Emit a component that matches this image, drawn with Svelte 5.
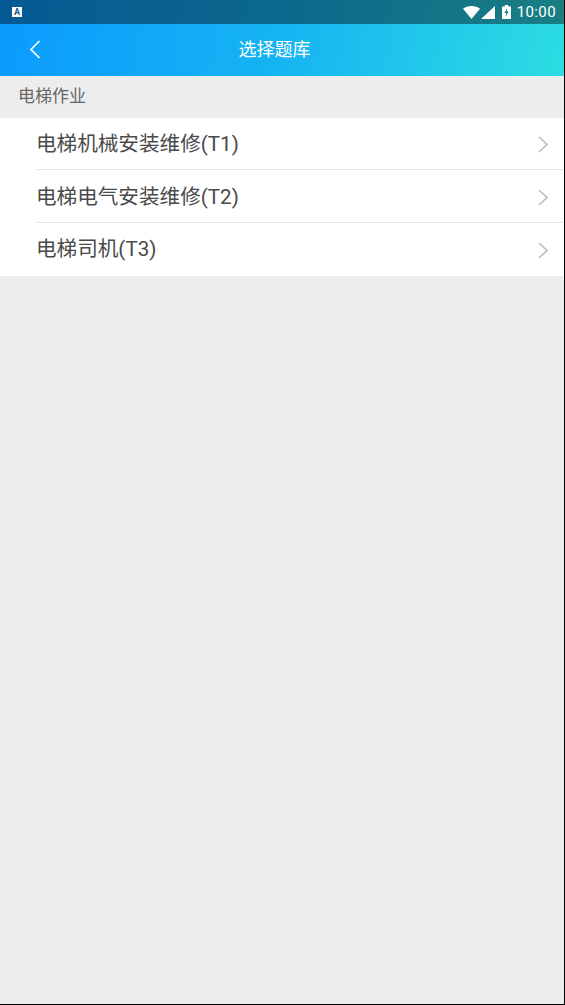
<script>
  const items = ["电梯机械安装维修(T1)", "电梯电气安装维修(T2)", "电梯司机(T3)"];
</script>

<div class="page">
  <div class="top">
    <div class="status">
      <div class="notice"><span>A</span></div>
      <div class="status-right">
        <svg class="wifi" width="17" height="13" viewBox="0 0 17 13">
          <path d="M0 2.800C2.300 1 5.200 0 8.500 0s6.200 1 8.500 2.800L8.500 13z" fill="#fff" />
        </svg>
        <svg class="signal" width="14" height="13" viewBox="0 0 14 13">
          <path d="M14 0v13H0z" fill="#fff" />
        </svg>
        <svg class="battery" width="9" height="14" viewBox="0 0 9 14">
          <path d="M2.800 0h3.400v1.500H9V14H0V1.500h2.800z" fill="#fff" />
          <path d="M5.200 3 2.300 8h1.900l-.4 3.500L6.700 6.500H4.700z" fill="#137a8f" />
        </svg>
        <span class="time">10:00</span>
      </div>
    </div>
    <div class="header">
      <svg class="back" width="12" height="19" viewBox="0 0 12 19">
        <path d="M10.500 1 2 9.500l8.500 8.500" fill="none" stroke="#fff" stroke-width="1.700" />
      </svg>
      <h1>选择题库</h1>
    </div>
  </div>

  <div class="section">电梯作业</div>

  <ul class="list">
    {#each items as item}
      <li>
        <div class="row">
          <span class="label">{item}</span>
          <svg class="chevron" width="11" height="17" viewBox="0 0 11 17">
            <path d="M1 1l8 7.500L1 16" fill="none" stroke="#bdbdbd" stroke-width="1.700" />
          </svg>
        </div>
      </li>
    {/each}
  </ul>
</div>

<style>
  :global(body) {
    margin: 0;
    background: #000;
  }
  .page {
    box-sizing: border-box;
    width: 564px;
    height: 1004px;
    background: #ededed;
    overflow: hidden;
    font-family: Roboto, "Noto Sans CJK SC", sans-serif;
  }
  .top {
    background: linear-gradient(100deg, #0a9bfe 0%, #16b4f2 50%, #2cdde2 100%);
  }
  .status {
    height: 24px;
    box-sizing: border-box;
    background: rgba(0, 0, 0, 0.42);
    display: flex;
    justify-content: space-between;
    align-items: center;
    padding: 0 8px 0 12px;
  }
  .notice {
    width: 10px;
    height: 10px;
    background: #fff;
    display: flex;
    align-items: center;
    justify-content: center;
  }
  .notice span {
    font-size: 9px;
    font-weight: 700;
    line-height: 10px;
    color: #0a5c92;
  }
  .status-right {
    display: flex;
    align-items: center;
    color: #fff;
  }
  .signal {
    margin-left: 1px;
  }
  .battery {
    margin-left: 7px;
  }
  .time {
    margin-left: 6px;
    font-size: 15px;
    letter-spacing: 0.4px;
  }
  .header {
    height: 52px;
    box-sizing: border-box;
    padding: 0 15px 4px 0;
    display: flex;
    align-items: center;
    justify-content: center;
    position: relative;
  }
  .back {
    position: absolute;
    left: 29px;
    top: 16px;
  }
  h1 {
    margin: 0;
    font-size: 18px;
    font-weight: 400;
    color: #fff;
  }
  .section {
    height: 42px;
    box-sizing: border-box;
    padding: 10px 0 0 18px;
    font-size: 17px;
    line-height: 21px;
    color: #666;
  }
  .list {
    list-style: none;
    margin: 0;
    padding: 0 0 0 36px;
    background: #fff;
  }
  .row {
    height: 53px;
    box-sizing: border-box;
    padding-right: 15px;
    display: flex;
    align-items: center;
    justify-content: space-between;
    border-bottom: 1px solid #e2e2e2;
  }
  li:first-child .row {
    height: 52px;
  }
  li:last-child .row {
    border-bottom: none;
  }
  .label {
    font-size: 20.6px;
    color: #4a4a4a;
    margin-bottom: 3px;
  }
  li:last-child .label {
    margin-bottom: 5px;
  }
  .chevron {
    margin-top: 2px;
  }
</style>
